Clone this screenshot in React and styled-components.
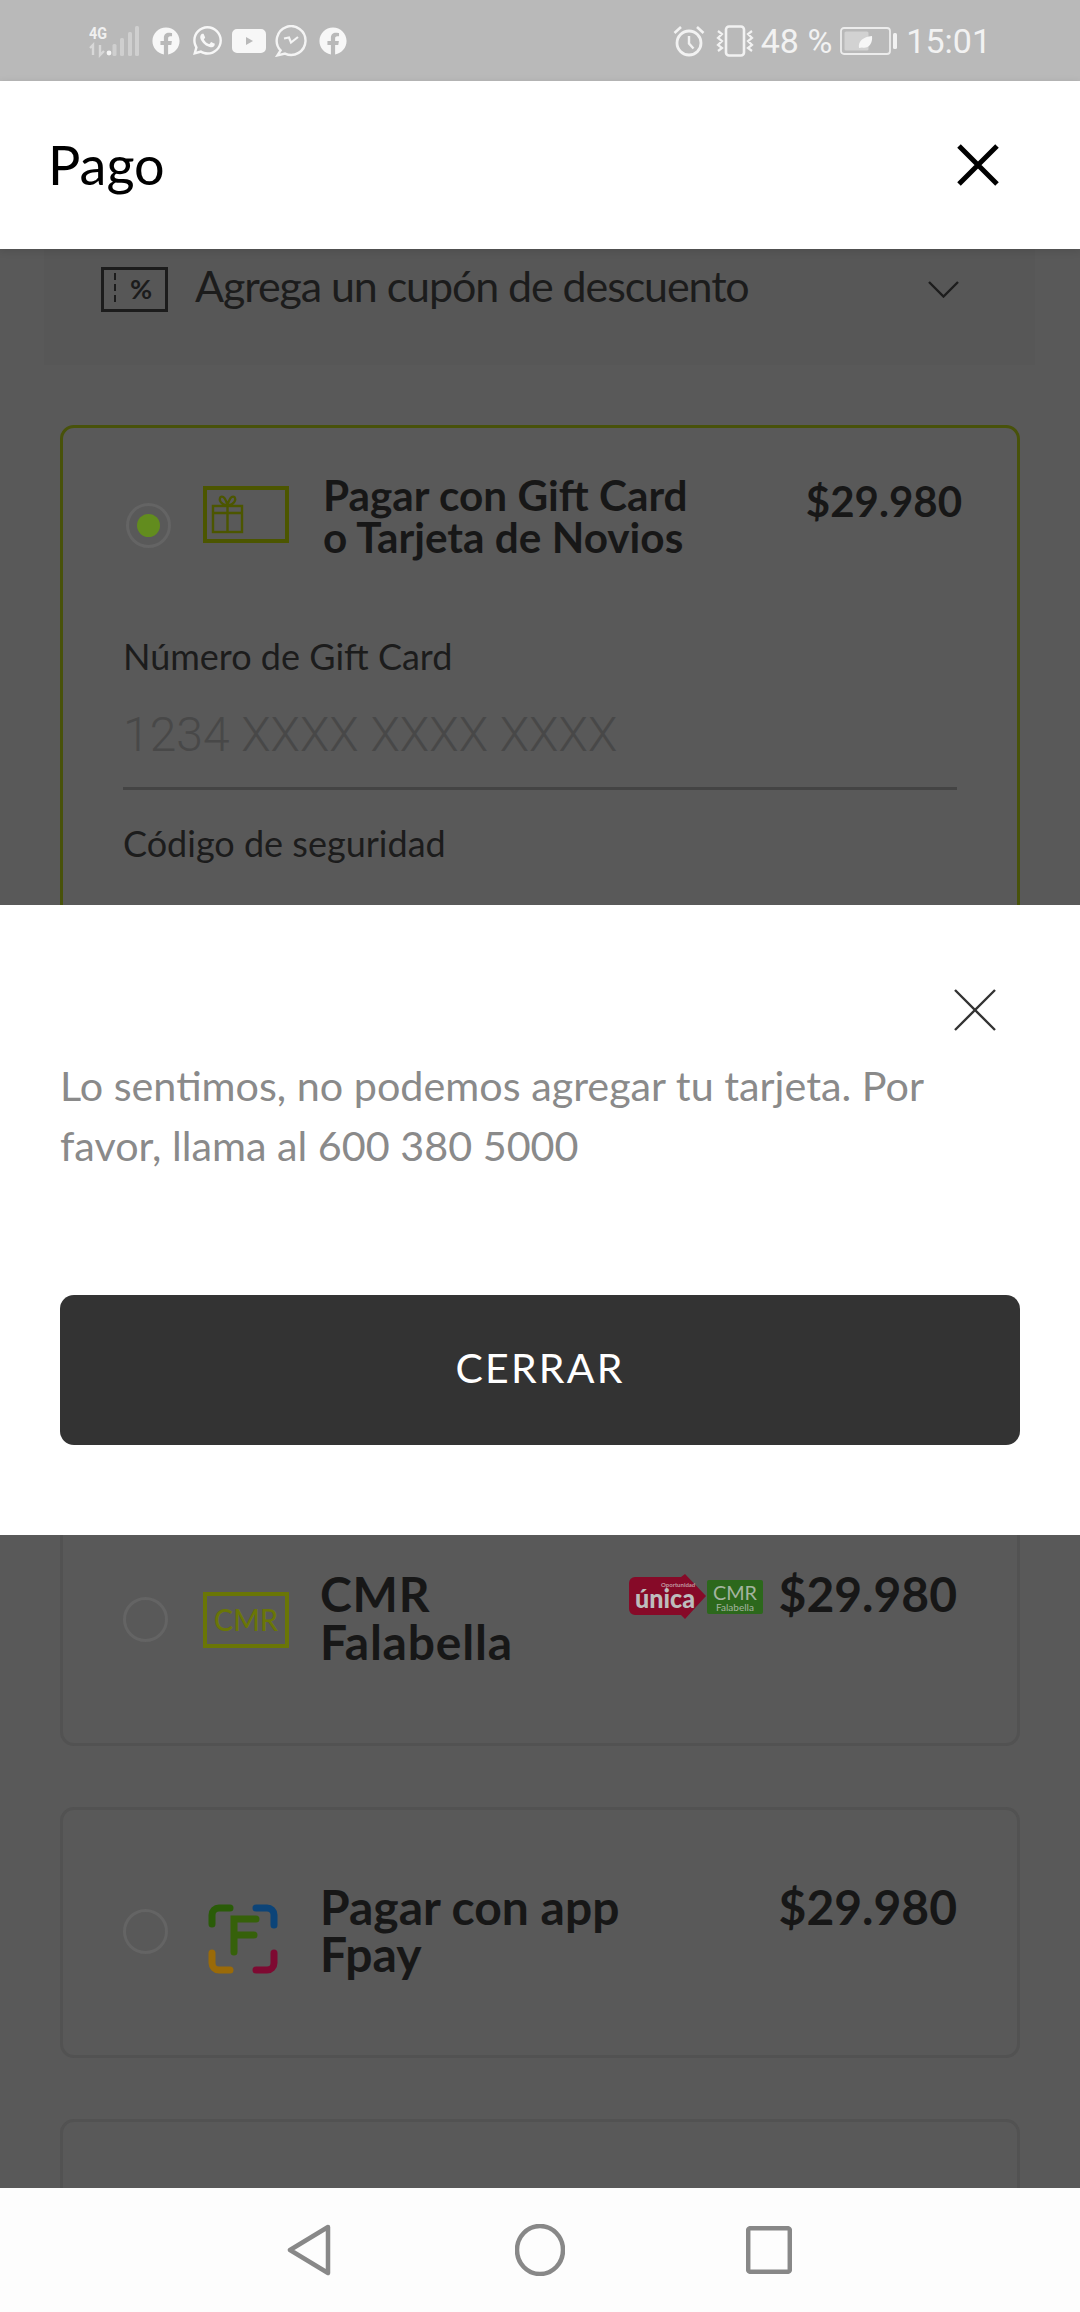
import React from "react";
import styled, { createGlobalStyle } from "styled-components";
import { FaFacebook, FaWhatsapp } from "react-icons/fa";

const Global = createGlobalStyle`
  html, body { margin: 0; padding: 0; background: #595959; }
  * { box-sizing: border-box; }
`;

const Screen = styled.div`
  position: relative;
  width: 1080px;
  height: 2312px;
  display: flex;
  flex-direction: column;
  overflow: hidden;
  font-family: Lato, "Liberation Sans", sans-serif;
  background: #595959;
`;

/* Status bar */
const StatusBar = styled.div`
  height: 81px;
  flex: none;
  background: #b9b9b9;
  display: flex;
  align-items: center;
  justify-content: space-between;
  padding: 0 89px 0 89px;
  color: #f4f4f4;
`;
const StatusGroup = styled.div`
  display: flex;
  align-items: center;
`;
const StatusSlot = styled.span`
  display: flex;
  align-items: center;
  margin-left: ${(p) => p.$ml || 0}px;
`;
const StatusText = styled.span`
  font-family: Roboto, sans-serif;
  font-size: 34px;
  font-weight: 400;
  line-height: 40px;
  color: #f2f2f2;
  margin-left: ${(p) => p.$ml || 0}px;
  white-space: nowrap;
`;

/* Header */
const Header = styled.header`
  position: relative;
  z-index: 2;
  height: 168px;
  flex: none;
  background: #fff;
  display: flex;
  align-items: center;
  justify-content: space-between;
  padding: 0 81px 0 48px;
  box-shadow: 0 2px 8px rgba(0, 0, 0, 0.12);
`;
const HeaderTitle = styled.h1`
  margin: 0;
  font-size: 54px;
  font-weight: 400;
  color: #000;
  line-height: 64px;
`;

/* Page behind the dialog */
const Content = styled.main`
  position: relative;
  flex: 1;
  min-height: 0;
  overflow: hidden;
  padding: 0 60px;
`;
const CouponBand = styled.div`
  margin: 0 -16px;
  width: 991px;
  height: 116px;
  background: #575757;
  display: flex;
  align-items: flex-start;
  padding: 18px 76px 0 57px;
`;
const CouponText = styled.span`
  flex: 1;
  margin-left: 27px;
  margin-top: -3px;
  font-size: 43px;
  letter-spacing: -1.1px;
  line-height: 44px;
  color: #1c1c1c;
`;
const Chevron = styled.svg`
  margin-top: 14px;
`;
const CardList = styled.div`
  display: flex;
  flex-direction: column;
  gap: 61px;
  margin-top: 60px;
`;
const Card = styled.section`
  width: 960px;
  height: ${(p) => p.$h}px;
  flex: none;
  border: 3px solid ${(p) => (p.$active ? "#48520a" : "#525252")};
  border-radius: 14px;
  padding: ${(p) => p.$pt}px ${(p) => (p.$active ? 55 : 60)}px 0 60px;
`;
const OptionRow = styled.div`
  display: flex;
  align-items: flex-start;
`;
const Radio = styled.span`
  flex: none;
  width: 45px;
  height: 45px;
  border-radius: 50%;
  border: 3px solid #646464;
  display: flex;
  align-items: center;
  justify-content: center;
  margin-top: ${(p) => p.$mt}px;
  margin-left: ${(p) => p.$ml || 0}px;
  &::after {
    content: "";
    display: ${(p) => (p.$on ? "block" : "none")};
    width: 23px;
    height: 23px;
    border-radius: 50%;
    background: #628c1e;
  }
`;
const OptionIcon = styled.svg`
  flex: none;
  margin-top: ${(p) => p.$mt}px;
  margin-left: ${(p) => p.$ml}px;
`;
const OptionTitle = styled.div`
  flex: 1;
  margin-left: ${(p) => p.$ml}px;
  font-weight: 700;
  font-size: ${(p) => p.$size}px;
  line-height: ${(p) => p.$lh}px;
  letter-spacing: ${(p) => p.$ls || 0}px;
  color: #171717;
  white-space: nowrap;
`;
const Price = styled.div`
  flex: none;
  font-weight: 700;
  font-size: ${(p) => p.$size}px;
  line-height: ${(p) => p.$lh}px;
  margin-top: ${(p) => p.$mt || 0}px;
  color: #171717;
`;
const Badges = styled.svg`
  flex: none;
  margin-right: 16px;
  margin-top: 4px;
`;
const FieldLabel = styled.div`
  font-size: 36px;
  line-height: 40px;
  color: #1c1c1c;
  margin-top: ${(p) => p.$mt}px;
`;
const FieldValue = styled.div`
  font-family: Roboto, sans-serif;
  font-weight: 300;
  font-size: 48px;
  line-height: 54px;
  color: #484848;
  margin-top: 32px;
  padding-bottom: 25px;
  border-bottom: 3px solid #444;
  width: 834px;
`;

/* Dialog */
const Dialog = styled.div`
  position: absolute;
  top: 656px;
  left: 0;
  width: 1080px;
  height: 630px;
  background: #fff;
  display: flex;
  flex-direction: column;
  padding: 84px 60px 0;
`;
const DialogClose = styled.svg`
  align-self: flex-end;
  margin-right: 24px;
  flex: none;
`;
const DialogText = styled.p`
  margin: 24px 0 0;
  font-size: 41.3px;
  line-height: 60px;
  color: #8a8a8a;
  width: 900px;
`;
const CloseButton = styled.button`
  margin-top: 120px;
  width: 960px;
  height: 150px;
  flex: none;
  background: #333;
  border: 0;
  border-radius: 14px;
  padding: 0 0 5px;
  color: #fff;
  font-family: Lato, sans-serif;
  font-size: 41px;
  font-weight: 400;
  letter-spacing: 2.2px;
`;

/* Nav bar */
const NavBar = styled.nav`
  position: relative;
  z-index: 2;
  height: 124px;
  flex: none;
  background: #fdfdfd;
  display: flex;
  align-items: flex-start;
  padding: 36px 0 0 287px;
`;
const NavIcon = styled.svg`
  flex: none;
  margin-left: ${(p) => p.$ml || 0}px;
  margin-top: ${(p) => p.$mt || 0}px;
`;

const Fb = () => <FaFacebook size={28} color="#f7f7f7" />;

const Signal = () => (
  <svg width="62" height="38" viewBox="0 -3 62 38">
    <text x="0" y="14" fontFamily="Roboto, sans-serif" fontWeight="700" fontSize="17" textLength="18" lengthAdjust="spacingAndGlyphs" fill="#f0f0f0">4G</text>
    <path d="M4 30V20l-3 3M11 20v10l4-4" fill="none" stroke="#d8d8d8" strokeWidth="2.4" />
    <circle cx="20" cy="28" r="2.4" fill="#f4f4f4" />
    <g fill="#cfcfcf">
      <rect x="23.5" y="19" width="4" height="12" rx="1.5" />
      <rect x="31" y="13" width="4" height="18" rx="1.5" />
      <rect x="39" y="7" width="4" height="24" rx="1.5" />
      <rect x="46" y="1" width="4" height="30" rx="1.5" />
    </g>
  </svg>
);

const YouTubeMark = () => (
  <svg width="34" height="24" viewBox="0 0 34 24">
    <path fillRule="evenodd" fill="#f7f7f7" d="M5 0h24a5 5 0 0 1 5 5v14a5 5 0 0 1-5 5H5a5 5 0 0 1-5-5V5a5 5 0 0 1 5-5zM14 8v8l7-4z" />
  </svg>
);

const MessengerMark = () => (
  <svg width="32" height="32" viewBox="0 0 32 32">
    <path d="M5.6 25.4 A14.4 14.4 0 1 1 10 28.6 L2.4 30.4 Z" fill="none" stroke="#f4f4f4" strokeWidth="2.4" />
    <path d="M9 13.5 L14 12.5 L16 17.5 L23 12" fill="none" stroke="#f4f4f4" strokeWidth="2.2" />
  </svg>
);

const Alarm = () => (
  <svg width="32" height="32" viewBox="0 0 32 32" fill="none" stroke="#f2f2f2">
    <circle cx="16" cy="18" r="12" strokeWidth="2.8" />
    <path d="M16 11v7.5l4.5 5" strokeWidth="2.4" />
    <path d="M1.5 8 8 2M30.5 8 24 2" strokeWidth="2.6" />
  </svg>
);

const Vibrate = () => (
  <svg width="40" height="32" viewBox="0 0 40 32" fill="none" stroke="#f2f2f2">
    <rect x="11" y="1.5" width="18" height="29" rx="3" strokeWidth="2.6" />
    <path d="M3 6l4 3-4 4 4 3-4 4 4 3-4 3M37 6l-4 3 4 4-4 3 4 4-4 3 4 3" strokeWidth="2.2" />
  </svg>
);

const Battery = () => (
  <svg width="57" height="28" viewBox="0 0 57 28">
    <rect x="1" y="1" width="49" height="26" rx="3" fill="none" stroke="#ececec" strokeWidth="1.8" />
    <rect x="4.5" y="4.5" width="24" height="19" rx="1.5" fill="#d2d2d2" />
    <rect x="53" y="6" width="4" height="16" rx="1.5" fill="#f2f2f2" />
    <path d="M19 21c-1-7 4-11 13-12 1 8-4 13-10 11.5z" fill="#f6f6f6" />
  </svg>
);

const HeaderClose = () => (
  <svg width="42" height="42" viewBox="0 0 42 42">
    <path d="M2 2 40 40M40 2 2 40" stroke="#000" strokeWidth="5" />
  </svg>
);

const CouponIcon = () => (
  <svg width="67" height="45" viewBox="0 0 67 45" style={{ flex: "none" }}>
    <rect x="1.5" y="1.5" width="64" height="42" fill="none" stroke="#1c1c1c" strokeWidth="3" />
    <path d="M14 6v32" stroke="#1c1c1c" strokeWidth="2" strokeDasharray="7 4" />
    <text x="40" y="32" textAnchor="middle" fontFamily="Lato, sans-serif" fontWeight="700" fontSize="27" fill="#1c1c1c">%</text>
  </svg>
);

const GiftIcon = () => (
  <OptionIcon $mt={12} $ml={32} width="86" height="57" viewBox="0 0 86 57" fill="none" stroke="#4c5600">
    <rect x="2" y="2" width="82" height="53" strokeWidth="4" />
    <rect x="10" y="20" width="29" height="26" strokeWidth="2.4" />
    <path d="M10 27h29M24.5 20v26" strokeWidth="2.4" />
    <path d="M24.5 20c-7-2-9-6-7-9 3-2 6 3 7 9 1-6 4-11 7-9 2 3 0 7-7 9z" strokeWidth="2.2" />
  </OptionIcon>
);

const CmrIcon = () => (
  <OptionIcon $mt={22} $ml={35} width="86" height="56" viewBox="0 0 86 56" fill="none">
    <rect x="2" y="2" width="82" height="52" stroke="#6a7606" strokeWidth="4" />
    <text x="43" y="39" textAnchor="middle" fontFamily="Lato, sans-serif" fontSize="31" fontWeight="500" textLength="64" lengthAdjust="spacingAndGlyphs" fill="#6a7606">CMR</text>
  </OptionIcon>
);

const FpayIcon = () => (
  <OptionIcon $mt={21} $ml={40} width="70" height="70" viewBox="0 0 70 70" fill="none" strokeWidth="7" strokeLinecap="round">
    <path d="M4 20V11a7 7 0 0 1 7-7h11" stroke="#2a5c08" />
    <path d="M48 4h11a7 7 0 0 1 7 7v10" stroke="#0c4478" />
    <path d="M4 49v10a7 7 0 0 0 7 7h11" stroke="#9a6a08" />
    <path d="M48 66h11a7 7 0 0 0 7-7V49" stroke="#7e0a32" />
    <path d="M26 48V15h22M26 31h20" stroke="#36610a" strokeWidth="7" />
  </OptionIcon>
);

const CmrBadges = () => (
  <Badges width="134" height="45" viewBox="0 0 134 45">
    <path d="M6 3H52L56 0 77 22 56 45 52 41H6a6 6 0 0 1-6-6V9a6 6 0 0 1 6-6z" fill="#860a28" />
    <text x="32" y="13" fontFamily="Lato, sans-serif" fontWeight="700" fontSize="6" fill="#c09aa2">Oportunidad</text>
    <text x="6" y="34" fontFamily="Lato, sans-serif" fontWeight="900" fontSize="27" textLength="60" lengthAdjust="spacingAndGlyphs" fill="#bdbdbd">única</text>
    <rect x="78" y="6" width="56" height="34" rx="2" fill="#2c681c" />
    <text x="106" y="26" textAnchor="middle" fontFamily="Lato, sans-serif" fontSize="20" textLength="44" lengthAdjust="spacingAndGlyphs" fill="#a4b4a0">CMR</text>
    <text x="106" y="37" textAnchor="middle" fontFamily="Lato, sans-serif" fontSize="10" fill="#a4b4a0">Falabella</text>
  </Badges>
);

export default function App() {
  return (
    <Screen>
      <Global />
      <StatusBar>
        <StatusGroup>
          <Signal />
          <StatusSlot $ml={1}><Fb /></StatusSlot>
          <StatusSlot $ml={11}><FaWhatsapp size={33} color="#f7f7f7" /></StatusSlot>
          <StatusSlot $ml={8}><YouTubeMark /></StatusSlot>
          <StatusSlot $ml={9}><MessengerMark /></StatusSlot>
          <StatusSlot $ml={12}><Fb /></StatusSlot>
        </StatusGroup>
        <StatusGroup>
          <Alarm />
          <StatusSlot $ml={10}><Vibrate /></StatusSlot>
          <StatusText $ml={6}>48 %</StatusText>
          <StatusSlot $ml={8}><Battery /></StatusSlot>
          <StatusText $ml={9}>15:01</StatusText>
        </StatusGroup>
      </StatusBar>

      <Header>
        <HeaderTitle>Pago</HeaderTitle>
        <HeaderClose />
      </Header>

      <Content>
        <CouponBand>
          <CouponIcon />
          <CouponText>Agrega un cupón de descuento</CouponText>
          <Chevron width="31" height="17" viewBox="0 0 31 17">
            <path d="M1 1 15.5 15.5 30 1" fill="none" stroke="#1c1c1c" strokeWidth="2.4" />
          </Chevron>
        </CouponBand>

        <CardList>
          <Card $active $h={1009} $pt={46}>
            <OptionRow>
              <Radio $on $mt={29} $ml={3} />
              <GiftIcon />
              <OptionTitle $ml={34} $size={42.3} $lh={42}>
                Pagar con Gift Card
                <br />o Tarjeta de Novios
              </OptionTitle>
              <Price $size={42} $lh={48} $mt={3}>$29.980</Price>
            </OptionRow>
            <FieldLabel $mt={78}>Número de Gift Card</FieldLabel>
            <FieldValue>1234 XXXX XXXX XXXX</FieldValue>
            <FieldLabel $mt={33}>Código de seguridad</FieldLabel>
          </Card>

          <Card $h={251} $pt={72}>
            <OptionRow>
              <Radio $mt={27} />
              <CmrIcon />
              <OptionTitle $ml={31} $size={48} $lh={48} $ls={0.8}>
                CMR
                <br />
                Falabella
              </OptionTitle>
              <CmrBadges />
              <Price $size={48} $lh={48}>$29.980</Price>
            </OptionRow>
          </Card>

          <Card $h={251} $pt={73}>
            <OptionRow>
              <Radio $mt={26} />
              <FpayIcon />
              <OptionTitle $ml={42} $size={48} $lh={47}>
                Pagar con app
                <br />
                Fpay
              </OptionTitle>
              <Price $size={48} $lh={47}>$29.980</Price>
            </OptionRow>
          </Card>

          <Card $h={251} $pt={75} />
        </CardList>

        <Dialog role="dialog">
          <DialogClose width="42" height="42" viewBox="0 0 42 42">
            <path d="M1 1 41 41M41 1 1 41" stroke="#333" strokeWidth="2.4" />
          </DialogClose>
          <DialogText>Lo sentimos, no podemos agregar tu tarjeta. Por favor, llama al 600 380 5000</DialogText>
          <CloseButton>CERRAR</CloseButton>
        </Dialog>
      </Content>

      <NavBar>
        <NavIcon width="45" height="52" viewBox="0 0 45 52">
          <path d="M41 3 L3 26 L41 49 Z" fill="none" stroke="#888" strokeWidth="4.5" strokeLinejoin="round" />
        </NavIcon>
        <NavIcon $ml={183} width="50" height="52" viewBox="0 0 50 52">
          <ellipse cx="25" cy="26" rx="23" ry="24" fill="none" stroke="#888" strokeWidth="4.5" />
        </NavIcon>
        <NavIcon $ml={181} $mt={2} width="46" height="48" viewBox="0 0 46 48">
          <rect x="2.2" y="2.2" width="41.6" height="43.6" rx="2" fill="none" stroke="#888" strokeWidth="4.5" />
        </NavIcon>
      </NavBar>
    </Screen>
  );
}
